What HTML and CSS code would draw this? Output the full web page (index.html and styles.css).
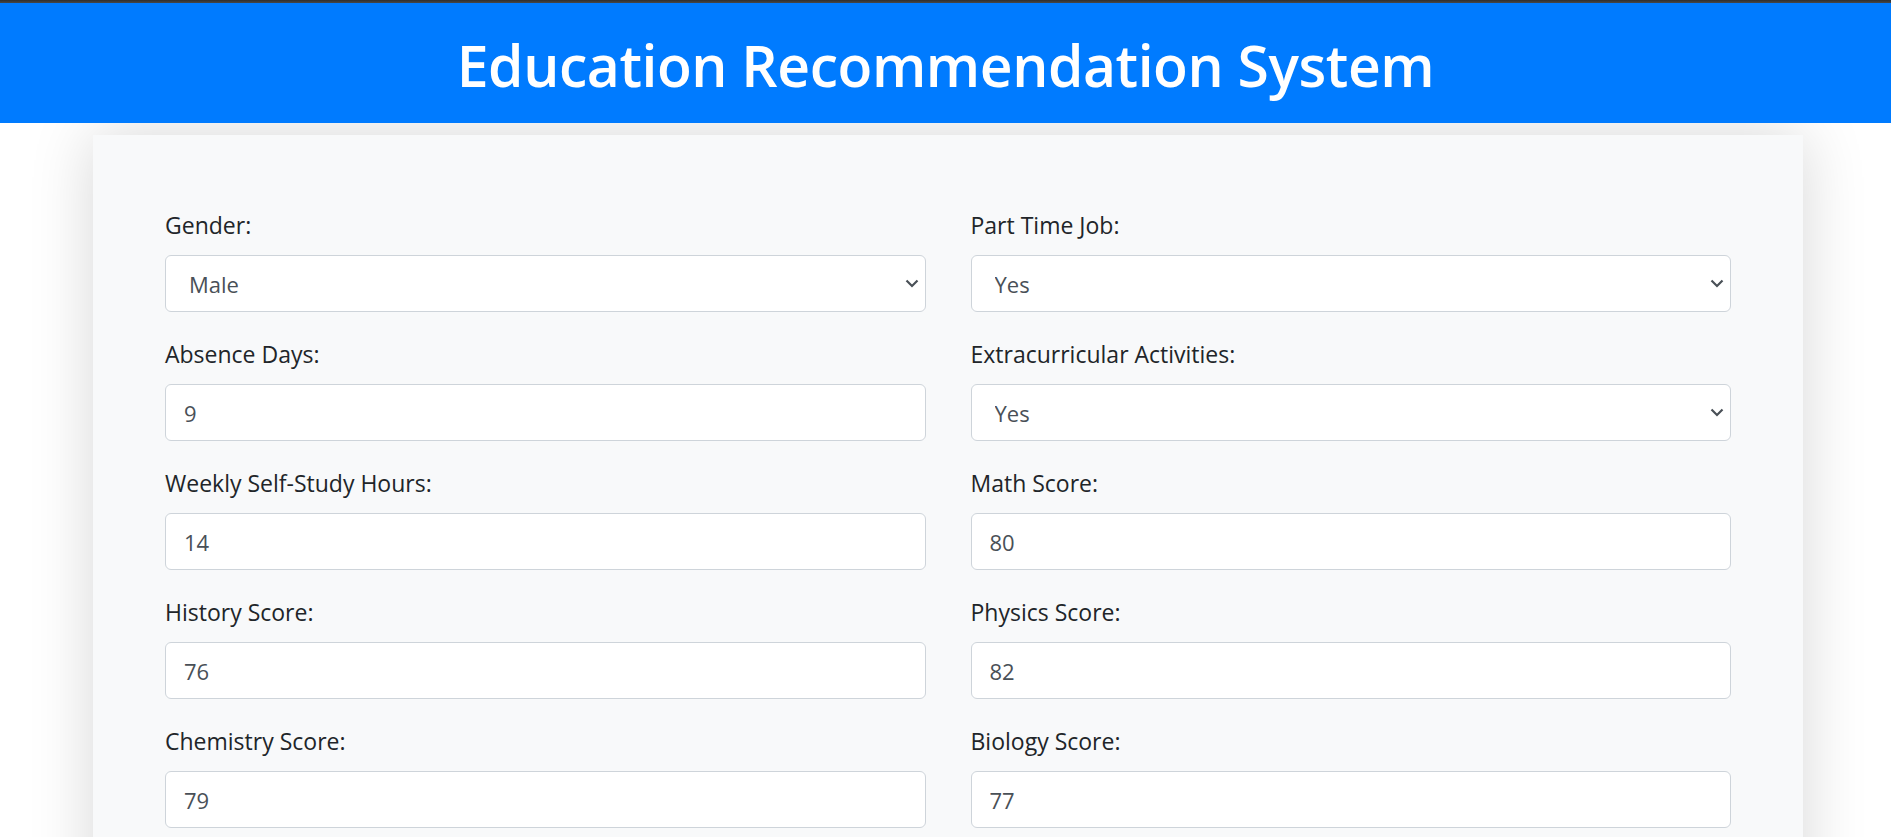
FILE: index.html
```html
<!DOCTYPE html>
<html lang="en">
<head>
<meta charset="utf-8">
<title>Education Recommendation System</title>
<link rel="stylesheet" href="styles.css">
</head>
<body>
<div class="topbar"></div>
<header class="site-header">
  <h1 class="site-title">Education Recommendation System</h1>
</header>
<main class="card">
  <form class="form-grid">
    <div class="field">
      <label class="field-label" for="gender">Gender:</label>
      <select class="control control-select" id="gender"><option>Male</option><option>Female</option></select>
    </div>
    <div class="field">
      <label class="field-label" for="job">Part Time Job:</label>
      <select class="control control-select" id="job"><option>Yes</option><option>No</option></select>
    </div>
    <div class="field">
      <label class="field-label" for="absence">Absence Days:</label>
      <input class="control" id="absence" type="text" value="9">
    </div>
    <div class="field">
      <label class="field-label" for="extra">Extracurricular Activities:</label>
      <select class="control control-select" id="extra"><option>Yes</option><option>No</option></select>
    </div>
    <div class="field">
      <label class="field-label" for="study">Weekly Self-Study Hours:</label>
      <input class="control" id="study" type="text" value="14">
    </div>
    <div class="field">
      <label class="field-label" for="math">Math Score:</label>
      <input class="control" id="math" type="text" value="80">
    </div>
    <div class="field">
      <label class="field-label" for="history">History Score:</label>
      <input class="control" id="history" type="text" value="76">
    </div>
    <div class="field">
      <label class="field-label" for="physics">Physics Score:</label>
      <input class="control" id="physics" type="text" value="82">
    </div>
    <div class="field">
      <label class="field-label" for="chem">Chemistry Score:</label>
      <input class="control" id="chem" type="text" value="79">
    </div>
    <div class="field">
      <label class="field-label" for="bio">Biology Score:</label>
      <input class="control" id="bio" type="text" value="77">
    </div>
  </form>
</main>
</body>
</html>
```
FILE: styles.css
```css
* { box-sizing: border-box; }

html, body {
  margin: 0;
  padding: 0;
  background: #ffffff;
  font-family: "Open Sans", "Noto Sans", "Liberation Sans", sans-serif;
  color: #212529;
}

.topbar {
  height: 3px;
  background: linear-gradient(#2e2e2e, #474747);
}

.site-header {
  position: relative;
  z-index: 2;
  height: 120px;
  background: #007bff;
  display: flex;
  align-items: center;
  justify-content: center;
}

.site-title {
  margin: 0;
  color: #ffffff;
  font-size: 57px;
  font-weight: 600;
  line-height: 1;
  letter-spacing: -0.45px;
  padding-top: 4px;
}

.card {
  position: relative;
  z-index: 1;
  margin: 12px 88px 0 93px;
  background: #f8f9fa;
  box-shadow: 0 0 60px rgba(0, 0, 0, 0.16);
  padding: 72px;
}

.form-grid {
  display: grid;
  grid-template-columns: 1fr 1fr;
  column-gap: 45px;
}

.field {
  margin-bottom: 24px;
}

.field-label {
  display: block;
  font-size: 23px;
  line-height: 36px;
  margin-bottom: 12px;
  color: #212529;
}

.control {
  display: block;
  width: 100%;
  height: 57px;
  padding: 9px 18px;
  font-family: inherit;
  font-size: 22px;
  line-height: 36px;
  color: #495057;
  background: #ffffff;
  border: 1px solid #ced4da;
  border-radius: 6px;
  outline: none;
}

.control-select {
  appearance: none;
  -webkit-appearance: none;
  padding-left: 23px;
  background-image: url("data:image/svg+xml,%3Csvg xmlns='http://www.w3.org/2000/svg' width='14' height='9' viewBox='0 0 14 9'%3E%3Cpath d='M1.5 1.5 L7 7 L12.5 1.5' fill='none' stroke='%23495057' stroke-width='2.2'/%3E%3C/svg%3E");
  background-repeat: no-repeat;
  background-position: right 6px center;
  background-size: 14px 9px;
}
```
